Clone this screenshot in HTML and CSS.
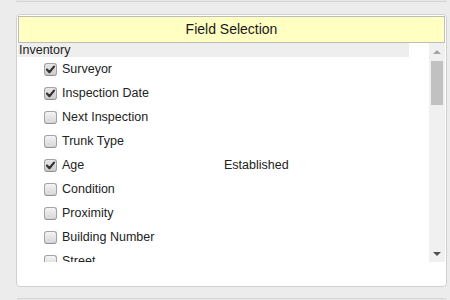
FILE: index.html
```html
<!DOCTYPE html>
<html>
<head>
<meta charset="utf-8">
<link rel="stylesheet" href="styles.css">
</head>
<body>
<div class="page">
  <div class="prev-panel"></div>
  <div class="panel">
    <div class="panel-title">Field Selection</div>
    <div class="list-area">
      <div class="list">
        <div class="group">Inventory</div>
        <div class="row"><div class="cell-name"><span class="cb checked"><svg viewBox="0 0 13 13" width="13" height="13"><path d="M3 6.6 L5.4 9.2 L10 3.6" fill="none" stroke="#333" stroke-width="2.2" stroke-linecap="round" stroke-linejoin="round"/></svg></span><span>Surveyor</span></div><div class="cell-val"></div></div>
        <div class="row"><div class="cell-name"><span class="cb checked"><svg viewBox="0 0 13 13" width="13" height="13"><path d="M3 6.6 L5.4 9.2 L10 3.6" fill="none" stroke="#333" stroke-width="2.2" stroke-linecap="round" stroke-linejoin="round"/></svg></span><span>Inspection Date</span></div><div class="cell-val"></div></div>
        <div class="row"><div class="cell-name"><span class="cb"></span><span>Next Inspection</span></div><div class="cell-val"></div></div>
        <div class="row"><div class="cell-name"><span class="cb"></span><span>Trunk Type</span></div><div class="cell-val"></div></div>
        <div class="row"><div class="cell-name"><span class="cb checked"><svg viewBox="0 0 13 13" width="13" height="13"><path d="M3 6.6 L5.4 9.2 L10 3.6" fill="none" stroke="#333" stroke-width="2.2" stroke-linecap="round" stroke-linejoin="round"/></svg></span><span>Age</span></div><div class="cell-val">Established</div></div>
        <div class="row"><div class="cell-name"><span class="cb"></span><span>Condition</span></div><div class="cell-val"></div></div>
        <div class="row"><div class="cell-name"><span class="cb"></span><span>Proximity</span></div><div class="cell-val"></div></div>
        <div class="row"><div class="cell-name"><span class="cb"></span><span>Building Number</span></div><div class="cell-val"></div></div>
        <div class="row"><div class="cell-name"><span class="cb"></span><span>Street</span></div><div class="cell-val"></div></div>
      </div>
      <div class="scrollbar">
        <div class="sb-btn"><span class="arrow-up"></span></div>
        <div class="sb-thumb"></div>
        <div class="sb-track"></div>
        <div class="sb-btn"><span class="arrow-down"></span></div>
      </div>
    </div>
  </div>
  <div class="next-panel"></div>
</div>
</body>
</html>
```

FILE: styles.css
```css
html, body {
  margin: 0;
  padding: 0;
}
body {
  background: #ececec;
  font-family: "Liberation Sans", Arial, sans-serif;
  color: #222;
  width: 450px;
  height: 300px;
  overflow: hidden;
}
.page {
  display: flex;
  flex-direction: column;
  padding-left: 16px;
}
.prev-panel {
  width: 431px;
  height: 1px;
  background: #e6e6e6;
  border-bottom: 1px solid #d4d4d4;
  border-radius: 0 0 4px 4px;
}
.panel {
  margin-top: 12px;
  padding: 1px 1px 24px 1px;
  box-sizing: border-box;
  height: 273px;
  width: 431px;
  border: 1px solid #cfcfcf;
  border-radius: 4px;
  background: #fff;
  display: flex;
  flex-direction: column;
}
.panel-title {
  height: 27px;
  box-sizing: border-box;
  border: 1px solid #bcbcbc;
  background: #ffffc2;
  text-align: center;
  font-size: 14px;
  line-height: 25px;
  color: #1a1a1a;
}
.list-area {
  display: flex;
  height: 219px;
}
.list {
  flex: 1;
  overflow: hidden;
  font-size: 12.5px;
}
.group {
  width: 391px;
  height: 14px;
  line-height: 14px;
  background: #eeeeee;
  padding-left: 1px;
  box-sizing: border-box;
}
.row {
  display: flex;
  height: 24px;
  align-items: center;
}
.cell-name {
  width: 206px;
  box-sizing: border-box;
  padding-left: 26px;
  display: flex;
  align-items: center;
  gap: 5px;
}
.cb {
  width: 13px;
  height: 13px;
  box-sizing: border-box;
  border: 1px solid #a2a2a2;
  border-bottom-color: #8e8e8e;
  border-radius: 3px;
  background: linear-gradient(#f4f4f4, #d6d6d6);
  display: inline-block;
  position: relative;
  flex: none;
}
.cb svg {
  position: absolute;
  left: -1px;
  top: -1px;
}
.cb.checked {
  background: linear-gradient(#e8e8e8, #cbcbcb);
}
.scrollbar {
  width: 16px;
  background: #f0f0f0;
  display: flex;
  flex-direction: column;
}
.sb-btn {
  height: 17px;
  display: flex;
  align-items: center;
  justify-content: center;
}
.sb-thumb {
  height: 44px;
  margin: 1px 2px 0 2px;
  background: #c1c1c1;
}
.sb-track {
  flex: 1;
}
.arrow-up {
  width: 0;
  height: 0;
  border-left: 4px solid transparent;
  border-right: 4px solid transparent;
  border-bottom: 4px solid #a3a3a3;
}
.arrow-down {
  width: 0;
  height: 0;
  border-left: 4px solid transparent;
  border-right: 4px solid transparent;
  border-top: 4px solid #505050;
}
.next-panel {
  margin-top: 11px;
  width: 431px;
  height: 10px;
  background: #e8e8e8;
  border-top: 1px solid #d4d4d4;
  border-radius: 4px 4px 0 0;
}
```
